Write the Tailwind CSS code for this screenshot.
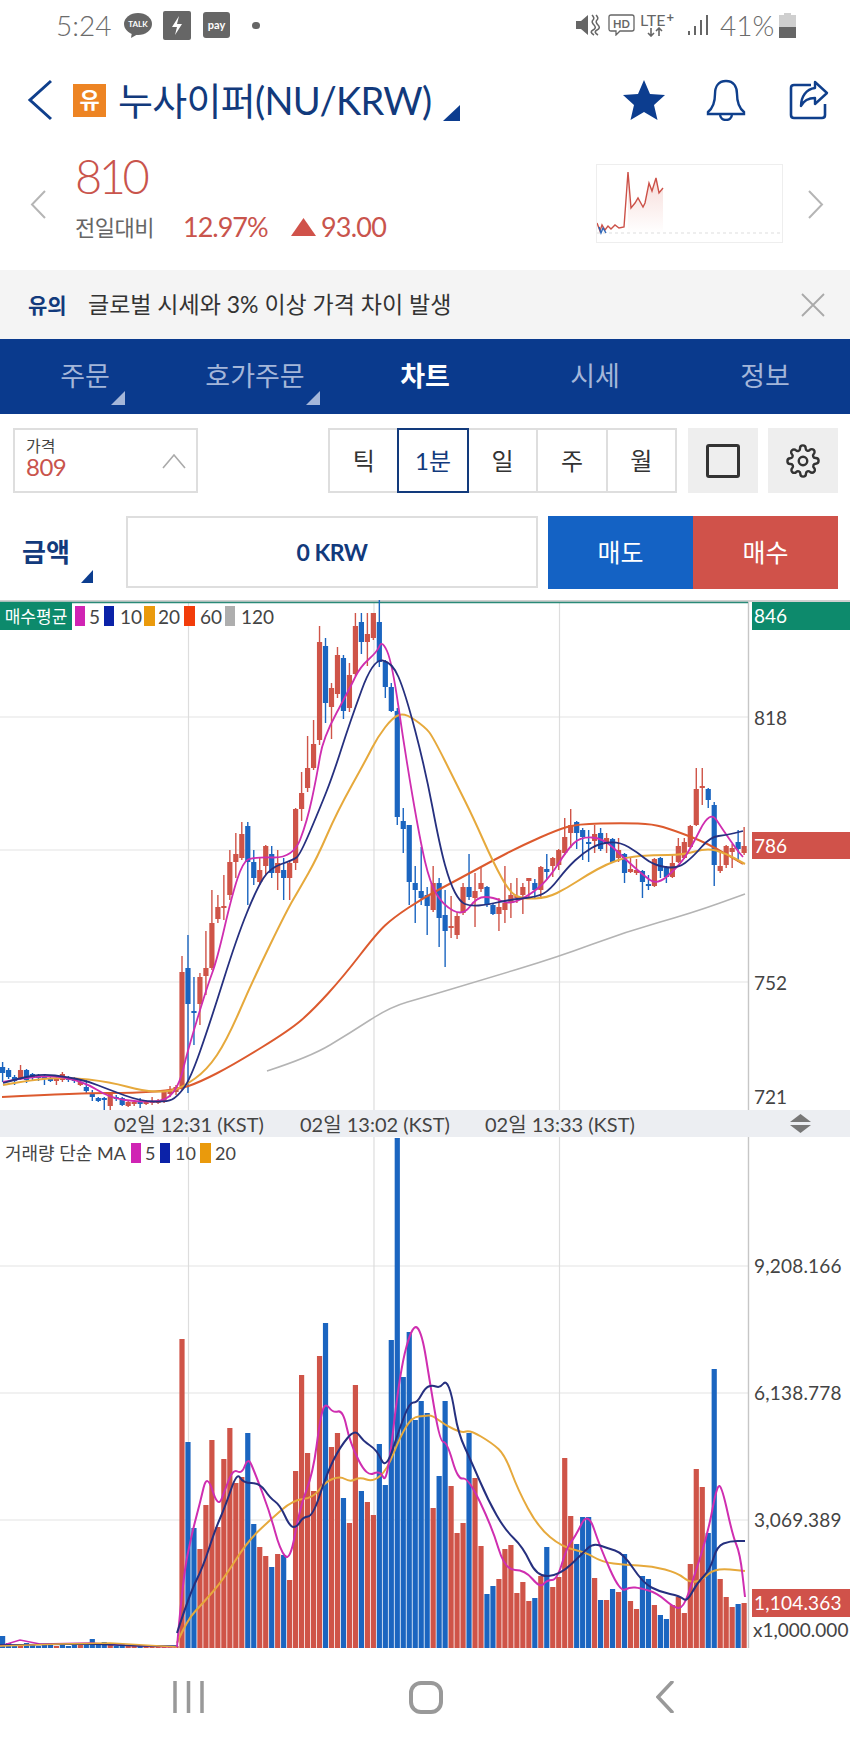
<!DOCTYPE html>
<html>
  <head>
    <meta charset="utf-8" />
    <title>누사이퍼 차트</title>
    <script src="https://cdn.jsdelivr.net/npm/@tailwindcss/browser@4"></script>
  </head>

  <body>
    <div class="relative w-[850px] h-[1748px] overflow-hidden bg-white font-['Lato','Noto_Sans_CJK_KR',sans-serif]">

      <!-- Status bar -->
      <div class="relative h-[62px] text-[#6b6b6b]">
        <div class="flex items-center h-[50px] pl-[56px]">
          <span class="text-[28px] font-light w-[68px] leading-none">5:24</span>
          <svg width="28" height="25" viewBox="0 0 28 25"><ellipse cx="14" cy="11" rx="14" ry="11" fill="#666"/><path d="M8 19l-1 6 7-4z" fill="#666"/><text x="14" y="14" font-size="8" font-weight="700" fill="#fff" text-anchor="middle">TALK</text></svg>
          <svg class="ml-[11px]" width="28" height="29" viewBox="0 0 28 29"><rect width="28" height="29" rx="2" fill="#666"/><path d="M16 5l-7 11h5l-2 8 7-11h-5z" fill="#fff"/></svg>
          <svg class="ml-[12px]" width="27" height="26" viewBox="0 0 27 26"><rect width="27" height="26" rx="3" fill="#666"/><text x="13.5" y="17" font-size="11" font-weight="700" fill="#fff" text-anchor="middle">pay</text></svg>
          <span class="ml-[22px] w-[8px] h-[7px] rounded-full bg-[#666]"></span>
          <svg class="ml-[315px]" width="25" height="24" viewBox="0 0 25 24"><path d="M1 8h5l7-6v20l-7-6H1z" fill="#666"/><path d="M17 2q3 3 1 5t1 5-1 5 1 5M21 2q3 3 1 5t1 5-1 5 1 5" fill="none" stroke="#666" stroke-width="1.5"/></svg>
          <svg class="ml-[8px]" width="27" height="22" viewBox="0 0 27 22"><path d="M3 1h21q2 0 2 2v12q0 2-2 2H12l-4 4v-4H3q-2 0-2-2V3q0-2 2-2z" fill="none" stroke="#666" stroke-width="1.3"/><text x="13.5" y="14" font-size="11" font-weight="700" fill="#666" text-anchor="middle">HD</text></svg>
          <div class="ml-[5px] flex flex-col w-[40px] h-[26px]">
            <div class="flex items-start h-[15px] text-[16px] leading-[15px] text-[#666]">LTE<span class="ml-[1px] text-[13px] leading-[10px] font-bold">+</span></div>
            <svg width="40" height="10" viewBox="0 16 40 10"><path d="M11 17v8M8 22l3 3 3-3M19 25v-8M16 20l3-3 3 3" fill="none" stroke="#666" stroke-width="1.6"/></svg>
          </div>
          <svg class="ml-[7px]" width="21" height="22" viewBox="0 0 21 22"><path d="M1 17h2v4H1zM7 12h2v9H7zM13 6h2v15h-2zM19 1h2v20h-2z" fill="#666"/></svg>
          <span class="ml-[12px] text-[28px] font-light leading-none">41%</span>
          <svg class="ml-[5px]" width="17" height="25" viewBox="0 0 17 25"><path d="M5 0h7v2h5v23H0V2h5z" fill="#cfcfcf"/><rect y="14" width="17" height="11" fill="#666"/></svg>
        </div>
      </div>

      <!-- Title row -->
      <div class="flex items-center h-[76px] pl-[27px]">
        <svg width="26" height="42" viewBox="0 0 26 42"><path d="M24 2L3 21l21 19" fill="none" stroke="#0f3f8c" stroke-width="3"/></svg>
        <span class="ml-[20px] flex items-center justify-center w-[33px] h-[33px] bg-[#ed8423] text-white text-[22px] font-bold leading-none">유</span>
        <span class="ml-[12px] w-[325px] text-[38px] leading-none text-[#123a7c] whitespace-nowrap tracking-[-0.7px]">누사이퍼(NU/KRW)</span>
        <svg class="mt-[26px]" width="17" height="16" viewBox="0 0 17 16"><path d="M17 0v16H0z" fill="#0c3d8f"/></svg>
        <svg class="ml-[162px]" width="44" height="42" viewBox="0 0 44 42"><path d="M22 1l6 14 15 1-11 10 3.500 15L22 33 8.500 41 12 26 1 16l15-1z" fill="#0c3d8f"/></svg>
        <svg class="ml-[40px]" width="40" height="42" viewBox="0 0 40 42"><path d="M20 2c-8 0-11 6-11 13 0 9-2 14-7 18v2h36v-2c-5-4-7-9-7-18 0-7-3-13-11-13zM14 35c0 4 3 6 6 6s6-2 6-6" fill="none" stroke="#0f3f8c" stroke-width="2.400"/></svg>
        <svg class="ml-[43px]" width="40" height="40" viewBox="0 0 40 40"><path d="M22 5H5q-3 0-3 3v27q0 3 3 3h28q3 0 3-3V24" fill="none" stroke="#0f3f8c" stroke-width="2.600"/><path d="M26 2l12 11-12 11v-6c-6 0-11 2-14 8 0-9 5-17 14-18z" fill="none" stroke="#0f3f8c" stroke-width="2.400" stroke-linejoin="round"/></svg>
      </div>

      <!-- Quote row -->
      <div class="relative flex h-[132px]">
        <svg class="mt-[52px] ml-[30px]" width="16" height="29" viewBox="0 0 16 29"><path d="M15 1L2 14.500 15 28" fill="none" stroke="#b5b5b5" stroke-width="2"/></svg>
        <div class="ml-[29px] w-[510px]">
          <div class="mt-[13px] text-[47px] leading-[50px] font-light text-[#c9544c] tracking-[-3.500px]">810</div>
          <div class="mt-[10px] flex items-center h-[32px]">
            <span class="w-[108px] text-[22px] text-[#666] tracking-[-0.5px]">전일대비</span>
            <span class="w-[108px] text-[27px] text-[#c9544c] tracking-[-1px]">12.97%</span>
            <svg width="25" height="18" viewBox="0 0 25 18"><path d="M12.500 0L25 18H0z" fill="#d0524a"/></svg>
            <span class="ml-[5px] text-[27px] text-[#c9544c] tracking-[-0.8px]">93.00</span>
          </div>
        </div>
        <div class="mt-[26px] ml-[11px] w-[187px] h-[79px] border border-[#eeeeee]">
          <svg width="185" height="77" viewBox="0 0 185 77">
            <defs><linearGradient id="miniFill" x1="0" y1="0" x2="0" y2="1"><stop offset="0" stop-color="#f6d9d6"/><stop offset="1" stop-color="#ffffff"/></linearGradient></defs>
            <path d="M31 7L34 43 38 38 41 33 46 42 48 38 52 18 55 26 59 13 62 28 66 23V68H31z" fill="url(#miniFill)"/>
            <path d="M0 68h185" stroke="#dddddd" stroke-dasharray="3 3"/>
            <polyline points="0,58 3,66 5,60 8,65 11,61 14,64 18,60 22,63 27,62 31,7 34,43 38,38 41,33 46,42 48,38 52,18 55,26 59,13 62,28 66,23" fill="none" stroke="#cc5148" stroke-width="1.400"/>
            <polyline points="2,62 4,68 6,63 9,68" fill="none" stroke="#2d66b8" stroke-width="1.400"/>
          </svg>
        </div>
        <svg class="mt-[52px] ml-[25px]" width="16" height="29" viewBox="0 0 16 29"><path d="M1 1l13 13.500L1 28" fill="none" stroke="#b5b5b5" stroke-width="2"/></svg>
      </div>

      <!-- Notice -->
      <div class="flex items-center h-[69px] pl-[28px] bg-[#f4f4f4]">
        <span class="w-[60px] text-[21px] font-bold text-[#123a7c]">유의</span>
        <span class="w-[713px] text-[23px] text-[#333]">글로벌 시세와 3% 이상 가격 차이 발생</span>
        <svg width="24" height="24" viewBox="0 0 24 24"><path d="M1 1l22 22M23 1L1 23" stroke="#a9a9a9" stroke-width="1.800"/></svg>
      </div>

      <!-- Tabs -->
      <div class="grid grid-cols-5 h-[75px] bg-[#0a3a8d] text-[27px] text-[#a4b6d9]">
        <div class="relative flex items-center justify-center">주문<svg class="absolute left-[111px] top-[52px]" width="14" height="14" viewBox="0 0 14 14"><path d="M14 0v14H0z" fill="#a4b6d9"/></svg></div>
        <div class="relative flex items-center justify-center">호가주문<svg class="absolute left-[136px] top-[52px]" width="14" height="14" viewBox="0 0 14 14"><path d="M14 0v14H0z" fill="#a4b6d9"/></svg></div>
        <div class="flex items-center justify-center font-bold text-white">차트</div>
        <div class="flex items-center justify-center">시세</div>
        <div class="flex items-center justify-center">정보</div>
      </div>

      <!-- Chart options -->
      <div class="flex h-[65px] mt-[14px] pl-[13px]">
        <div class="relative w-[185px] h-full border-2 border-[#dedede] pl-[11px]">
          <div class="mt-[7px] text-[16px] leading-[18px] text-[#444]">가격</div>
          <div class="text-[24px] leading-[24px] text-[#c9544c] tracking-[-0.5px]">809</div>
          <svg class="absolute right-[10px] top-[24px]" width="24" height="15" viewBox="0 0 24 15"><path d="M1 14L12 1l11 13" fill="none" stroke="#aaa" stroke-width="1.600"/></svg>
        </div>
        <div class="ml-[130px] flex w-[349px] h-full border-2 border-[#dedede] text-[24px] text-[#333]">
          <div class="flex-1 flex items-center justify-center">틱</div>
          <div class="flex-1 flex items-center justify-center -my-[2px] border-2 border-[#123a7c] text-[#123a7c]">1분</div>
          <div class="flex-1 flex items-center justify-center border-r-2 border-[#dedede]">일</div>
          <div class="flex-1 flex items-center justify-center border-r-2 border-[#dedede]">주</div>
          <div class="flex-1 flex items-center justify-center">월</div>
        </div>
        <div class="ml-[11px] flex items-center justify-center w-[70px] h-full bg-[#eeeeee]">
          <span class="w-[34px] h-[34px] rounded-[3px] border-[3px] border-[#333]"></span>
        </div>
        <div class="ml-[10px] flex items-center justify-center w-[70px] h-full bg-[#eeeeee]">
          <svg width="34" height="34" viewBox="0 0 24 24" fill="none" stroke="#333" stroke-width="1.700"><circle cx="12" cy="12" r="3"/><path d="M19.400 15a1.650 1.650 0 0 0 .33 1.820l.06.06a2 2 0 1 1-2.830 2.830l-.06-.06a1.650 1.650 0 0 0-2.800 1.170V21a2 2 0 1 1-4 0v-.09a1.650 1.650 0 0 0-2.800-1.170l-.06.06a2 2 0 1 1-2.830-2.830l.06-.06a1.650 1.650 0 0 0-1.170-2.800H3a2 2 0 1 1 0-4h.09a1.650 1.650 0 0 0 1.170-2.800l-.06-.06a2 2 0 1 1 2.830-2.830l.06.06a1.650 1.650 0 0 0 2.800-1.170V3a2 2 0 1 1 4 0v.09a1.650 1.650 0 0 0 2.800 1.170l.06-.06a2 2 0 1 1 2.830 2.830l-.06.06a1.650 1.650 0 0 0 1.170 2.800H21a2 2 0 1 1 0 4h-.09a1.650 1.650 0 0 0-1.510 1z"/></svg>
        </div>
      </div>

      <!-- Amount row -->
      <div class="flex h-[73px] mt-[23px]">
        <div class="relative w-[126px] pl-[22px] flex items-center text-[26px] font-bold text-[#123a7c]">
          금액
          <svg class="absolute left-[81px] top-[54px]" width="12" height="13" viewBox="0 0 12 13"><path d="M12 0v13H0z" fill="#0c3d8f"/></svg>
        </div>
        <div class="flex items-center justify-center w-[412px] h-[72px] border-2 border-[#dedede] text-[23px] font-bold text-[#123a7c] tracking-[-0.5px]">0 KRW</div>
        <div class="ml-[10px] flex items-center justify-center w-[145px] bg-[#1462c4] text-[25px] text-white">매도</div>
        <div class="flex items-center justify-center w-[145px] bg-[#d0524a] text-[25px] text-white">매수</div>
      </div>

      <!-- Price chart -->
      <div class="relative h-[510px] mt-[11px] border-t-2 border-[#d0d0d0] text-[19px] text-[#444]">
        <svg id="priceChart" class="absolute left-0 top-[-2px]" width="850" height="510" viewBox="0 600 850 510"></svg>
        <div class="absolute left-0 top-0 flex items-center h-[28px] text-[19px] leading-none">
          <span class="flex items-center justify-center w-[72px] h-[28px] bg-[#0d8a6c] text-[17px] text-white whitespace-nowrap">매수평균</span>
          <span class="ml-[3px] w-[10px] h-[20px] bg-[#d024b4]"></span><span class="ml-[4px] w-[15px]">5</span>
          <span class="w-[10px] h-[20px] bg-[#0b22a8]"></span><span class="ml-[6px] w-[24px]">10</span>
          <span class="w-[11px] h-[20px] bg-[#ea9a0c]"></span><span class="ml-[3px] w-[26px]">20</span>
          <span class="w-[11px] h-[20px] bg-[#f23c0a]"></span><span class="ml-[5px] w-[25px]">60</span>
          <span class="w-[10px] h-[20px] bg-[#aeaeae]"></span><span class="ml-[6px]">120</span>
        </div>
        <div class="absolute left-[752px] top-0 w-[98px] h-[28px] pl-[2px] bg-[#0d8a6c] text-white leading-[28px]">846</div>
        <div class="absolute left-[754px] top-[102px] leading-[28px]">818</div>
        <div class="absolute left-[752px] top-[230px] w-[98px] h-[27px] pl-[2px] bg-[#d0524a] text-white leading-[27px]">786</div>
        <div class="absolute left-[754px] top-[367px] leading-[28px]">752</div>
        <div class="absolute left-[754px] top-[481px] leading-[28px]">721</div>
      </div>

      <!-- Time axis -->
      <div class="relative flex items-center h-[27px] pl-[114px] bg-[#eceef2] text-[20px] text-[#444] whitespace-nowrap">
        <span class="w-[186px]">02일 12:31 (KST)</span>
        <span class="w-[185px]">02일 13:02 (KST)</span>
        <span class="w-[148px]">02일 13:33 (KST)</span>
        <svg class="absolute left-[790px] top-[4px]" width="21" height="19" viewBox="0 0 21 19"><path d="M10.500 0L21 8H0zM0 11h21l-10.500 8z" fill="#777"/></svg>
      </div>

      <!-- Volume chart -->
      <div class="relative h-[511px] text-[19px] text-[#444]">
        <svg id="volumeChart" class="absolute left-0 top-0" width="850" height="511" viewBox="0 1137 850 511"></svg>
        <div class="absolute left-[5px] top-[5px] flex items-center h-[22px] text-[18px] leading-none whitespace-nowrap">
          <span class="w-[126px]">거래량 단순 MA</span>
          <span class="w-[10px] h-[20px] bg-[#d024b4]"></span><span class="ml-[4px] w-[15px]">5</span>
          <span class="w-[10px] h-[20px] bg-[#0b22a8]"></span><span class="ml-[5px] w-[25px]">10</span>
          <span class="w-[11px] h-[20px] bg-[#ea9a0c]"></span><span class="ml-[4px]">20</span>
        </div>
        <div class="absolute left-[754px] top-[115px] leading-[28px] tracking-[0.2px]">9,208.166</div>
        <div class="absolute left-[754px] top-[242px] leading-[28px] tracking-[0.2px]">6,138.778</div>
        <div class="absolute left-[754px] top-[369px] leading-[28px] tracking-[0.2px]">3,069.389</div>
        <div class="absolute left-[752px] top-[452px] w-[98px] h-[28px] pl-[2px] bg-[#d0524a] text-white leading-[28px] tracking-[0.2px]">1,104.363</div>
        <div class="absolute left-[753px] top-[479px] leading-[28px]">x1,000.000</div>
      </div>

      <!-- Android nav -->
      <div class="flex items-center h-[100px] pl-[173px] pb-[2px]">
        <svg width="31" height="32" viewBox="0 0 31 32"><path d="M2 0v32M15.500 0v32M29 0v32" stroke="#999" stroke-width="3.500"/></svg>
        <svg class="ml-[205px]" width="34" height="33" viewBox="0 0 34 33"><rect x="2" y="2" width="30" height="29" rx="10" fill="none" stroke="#999" stroke-width="4"/></svg>
        <svg class="ml-[213px]" width="18" height="32" viewBox="0 0 18 32"><path d="M16 1L2 16l14 15" fill="none" stroke="#999" stroke-width="3.500" stroke-linecap="round"/></svg>
      </div>
    </div>

    <script>
      const RED = "#cf5448", BLUE = "#1b65c0";
      const X0 = 2.6, STEP = 5.98;

      // type, body top, body bottom, wick top, wick bottom (page pixels)
      const candles = [
        ["b",1067,1073,1062,1082],["b",1070,1077,1068,1079],["b",1077,1081,1075,1085],["r",1070,1078,1065,1080],["b",1070,1080,1069,1083],
        ["b",1074,1077,1073,1080],["b",1076,1078,1074,1081],["b",1077,1079,1075,1085],["b",1078,1081,1077,1082],["r",1078,1081,1077,1085],
        ["r",1074,1080,1072,1082],["b",1078,1080,1076,1082],["b",1078,1081,1077,1083],["r",1082,1085,1080,1086],["b",1087,1091,1080,1094],
        ["b",1093,1097,1090,1101],["b",1098,1101,1097,1102],["b",1098,1100,1097,1110],["r",1094,1106,1093,1110],["b",1097,1099,1095,1101],
        ["b",1098,1105,1097,1106],["r",1102,1106,1101,1107],["r",1102,1104,1101,1106],["b",1102,1104,1098,1108],["r",1102,1103,1100,1105],
        ["r",1101,1103,1097,1105],["r",1101,1102,1099,1104],["r",1092,1102,1090,1103],["r",1090,1094,1086,1097],["r",1087,1092,1085,1095],
        ["r",972,1087,956,1090],["b",968,1004,935,1093],["b",1011,1013,977,1045],["r",977,1004,973,1025],["r",968,976,931,995],
        ["r",923,968,890,970],["r",907,919,895,923],["r",906,908,875,920],["r",862,895,850,900],["r",854,862,833,878],
        ["r",834,858,822,860],["b",826,862,822,905],["b",862,878,850,885],["r",870,882,858,885],["r",846,866,845,875],
        ["b",854,873,846,878],["r",863,873,850,890],["b",870,878,858,900],["r",863,878,860,900],["r",809,863,808,870],
        ["r",793,809,772,821],["r",768,788,736,792],["r",744,768,720,770],["r",642,740,626,745],["b",646,703,638,723],
        ["r",688,707,683,739],["r",655,694,647,698],["b",658,711,655,719],["r",675,708,663,712],["r",626,674,613,676],
        ["b",622,642,613,654],["r",634,642,613,666],["r",613,638,613,640],["b",622,662,600,667],["b",662,687,660,698],
        ["b",687,711,683,712],["b",711,817,708,825],["b",821,829,808,853],["b",825,882,825,905],["b",883,890,866,923],
        ["b",891,898,847,905],["b",895,906,887,935],["r",883,910,866,912],["b",883,918,878,947],["b",915,931,890,967],
        ["r",926,928,896,938],["r",916,935,912,939],["r",887,913,883,915],["b",887,897,854,900],["r",891,898,873,927],
        ["r",883,889,867,892],["b",887,905,886,907],["b",905,914,903,915],["r",907,914,898,931],["r",903,910,866,923],
        ["r",895,903,883,918],["r",896,898,878,903],["r",887,895,883,914],["r",878,881,878,897],["b",883,890,879,898],
        ["r",867,890,866,899],["b",869,872,854,880],["r",858,866,857,877],["r",850,865,849,870],["r",837,853,818,855],
        ["r",825,833,809,848],["b",822,833,821,849],["b",830,837,828,860],["b",842,844,830,862],["r",834,841,825,853],
        ["b",833,849,828,851],["r",838,844,833,853],["b",839,862,838,863],["r",850,858,838,862],["b",854,873,853,883],
        ["r",869,872,858,873],["r",870,873,859,875],["b",871,882,870,898],["b",884,886,875,890],["r",859,886,858,887],
        ["b",858,871,857,878],["b",868,877,866,883],["r",863,877,855,878],["r",846,862,838,863],["r",842,858,838,859],
        ["r",826,847,825,848],["r",789,825,768,826],["r",786,788,768,805],["b",789,800,788,808],["b",805,865,802,886],
        ["r",866,871,850,873],["r",846,865,845,868],["r",848,852,844,868],["b",842,849,830,862],["r",846,853,827,855]
      ];

      // top of each volume bar, colour taken from the letter
      const lowVolume = [1636,1643,1645,1644,1643,1645,1646,1644,1645,1646,1644,1646,1645,1645,1643,1639,1643,1642,1645,1646,1644,1645,1646,1646,1646,1646,1646,1646,1646,1646];
      const lowColour = "bbbrbbbbbrbbbrbbbbrbbrrbrrrrrr";
      const volume = [
        "r1339","b1442","b1528","r1549","r1505","r1440","r1527","r1459","r1428","r1483","r1477","b1433","b1524","r1547","r1556","b1567","r1554","b1555","r1580","r1471",
        "r1375","r1453","r1491","r1356","b1323","r1447","r1433","b1498","r1523","r1385","b1491","r1502","r1515","b1444","b1485","b1340","b1138","b1377","b1332","b1420",
        "b1401","b1413","r1508","b1476","b1401","r1486","r1533","r1523","b1433","r1478","r1546","b1594","b1586","r1579","r1549","r1545","r1593","r1582","r1601","b1598",
        "r1576","b1547","r1587","r1577","r1458","r1516","b1544","b1517","b1517","r1578","b1600","r1600","b1589","r1592","b1554","r1601","r1609","b1576","b1579","r1605",
        "b1615","b1619","r1605","r1597","r1613","r1564","r1469","r1487","b1533","b1369","r1579","r1597","r1607","b1604","r1603"
      ];

      const priceLines = [
        ["#b4b4b4",1.5,"267,1071 310,1057 350,1033 390,1007 425,997 475,982 558,957 625,932 692,913 745,894"],
        ["#dc5a2e",2,"2,1097 83,1093 133,1093 177,1090 200,1082 233,1065 290,1030 313,1010 343,977 377,933 393,918 423,898 457,880 490,862 523,845 557,830 577,824 623,823 653,824 673,830 707,843 743,864"],
        ["#e6a93c",2,"3,1085 30,1080 67,1077 110,1082 143,1091 167,1092 183,1087 207,1070 227,1040 253,980 287,910 300,888 317,858 337,812 367,758 377,738 393,717 405,713 425,727 433,737 457,785 473,817 493,862 510,893 523,899 547,898 567,888 587,875 607,864 627,857 653,855 683,855 707,848 725,853 745,864"],
        ["#cf2eb0",1.8,"3,1082 43,1074 83,1081 110,1098 140,1102 167,1101 180,1083 187,1053 207,987 217,960 232,895 243,862 253,857 293,858 307,822 317,775 323,738 350,688 360,667 377,652 382,640 392,662 405,752 420,840 430,883 443,905 463,916 477,897 493,897 510,905 533,893 550,877 567,850 580,837 603,838 623,857 643,875 657,885 677,868 690,850 710,810 723,830 737,850 743,857"],
        ["#26307f",1.8,"3,1083 20,1078 43,1074 67,1077 87,1081 110,1090 140,1101 167,1102 177,1097 190,1080 210,1023 237,937 257,888 270,868 293,860 300,855 320,808 333,775 350,722 373,659 392,662 405,692 425,768 440,847 450,883 460,902 470,906 487,905 507,900 537,897 550,890 567,868 583,853 600,843 620,842 637,852 653,865 677,869 693,857 710,837 727,835 743,831"]
      ];

      const volumeLines = [
        ["#e6a93c",2,"177,1643 187,1620 203,1603 223,1580 247,1542 270,1520 293,1500 313,1498 325,1482 340,1476 350,1482 360,1477 373,1482 387,1470 400,1437 412,1417 425,1416 432,1415 445,1425 462,1433 470,1430 492,1443 505,1455 518,1490 538,1527 562,1547 585,1552 602,1562 625,1565 652,1566 678,1573 690,1583 702,1580 715,1568 745,1571"],
        ["#cf2eb0",2,"177,1647 183,1577 192,1533 200,1503 207,1473 218,1508 225,1490 233,1469 242,1474 248,1457 255,1473 270,1513 280,1550 290,1562 300,1507 313,1473 320,1420 325,1402 333,1413 343,1410 350,1443 367,1477 380,1470 387,1485 400,1370 413,1323 422,1333 430,1383 440,1442 447,1442 458,1480 468,1477 492,1527 505,1570 525,1570 540,1588 547,1580 557,1580 567,1547 575,1537 588,1511 600,1547 620,1592 630,1587 640,1588 657,1593 673,1607 683,1609 693,1580 708,1533 717,1485 722,1487 733,1537 740,1553 745,1597"],
        ["#26307f",2,"177,1633 190,1593 203,1567 215,1530 225,1507 237,1472 243,1483 260,1483 270,1498 280,1505 290,1527 297,1527 303,1517 313,1516 327,1473 340,1447 355,1429 363,1441 377,1450 386,1470 400,1427 410,1402 417,1403 425,1388 432,1385 440,1388 446,1380 452,1395 458,1433 472,1463 488,1500 505,1530 523,1547 537,1577 560,1575 583,1553 593,1543 607,1548 623,1553 643,1583 660,1592 680,1596 687,1602 697,1583 710,1570 717,1546 730,1541 745,1541"]
      ];

      const NS = "http://www.w3.org/2000/svg";
      function add(svg, tag, attrs) {
        const el = document.createElementNS(NS, tag);
        for (const k in attrs) el.setAttribute(k, attrs[k]);
        svg.appendChild(el);
      }
      function grid(svg, rows, top, bottom) {
        rows.forEach(y => add(svg, "line", { x1: 0, x2: 748, y1: y, y2: y, stroke: "#e4e4e4", "stroke-width": 1.2 }));
        [188.5, 374, 559.5].forEach(x => add(svg, "line", { x1: x, x2: x, y1: top, y2: bottom, stroke: "#dddddd", "stroke-width": 1.2 }));
        add(svg, "line", { x1: 748.5, x2: 748.5, y1: top, y2: bottom, stroke: "#c6c6c6", "stroke-width": 1.4 });
      }
      // rounds the corners: each point becomes a control point between midpoints
      function smooth(points) {
        const p = points.split(" ").map(s => s.split(",").map(Number));
        let d = `M${p[0][0]} ${p[0][1]}`;
        for (let i = 1; i < p.length - 1; i++) {
          const mx = (p[i][0] + p[i + 1][0]) / 2, my = (p[i][1] + p[i + 1][1]) / 2;
          d += `Q${p[i][0]} ${p[i][1]} ${mx} ${my}`;
        }
        const last = p[p.length - 1];
        return d + `L${last[0]} ${last[1]}`;
      }
      function lines(svg, list) {
        list.forEach(([stroke, width, points]) => add(svg, "path", { d: smooth(points), stroke, "stroke-width": width, fill: "none" }));
      }

      const price = document.getElementById("priceChart");
      grid(price, [717, 850, 982], 602, 1110);
      add(price, "line", { x1: 0, x2: 748, y1: 602.5, y2: 602.5, stroke: "#2a8a78", "stroke-width": 1.5 });
      candles.forEach(([t, top, bottom, hi, lo], i) => {
        const x = X0 + STEP * i, fill = t === "r" ? RED : BLUE;
        add(price, "rect", { x: x - 0.7, y: hi, width: 1.4, height: lo - hi, fill });
        add(price, "rect", { x: x - 2.6, y: top, width: 5.2, height: Math.max(bottom - top, 2), fill });
      });
      lines(price, priceLines);

      const vol = document.getElementById("volumeChart");
      grid(vol, [1266, 1393, 1520], 1137, 1648);
      const bars = lowVolume.map((top, i) => lowColour[i] + top).concat(volume);
      bars.forEach((bar, i) => {
        const y = +bar.slice(1);
        add(vol, "rect", { x: X0 + STEP * i - 2.6, y, width: 5.2, height: 1648 - y, fill: bar[0] === "r" ? RED : BLUE });
      });
      add(vol, "polyline", { points: "0,1646 20,1640 40,1644 90,1643 120,1645 177,1647", stroke: "#cf2eb0", "stroke-width": 1.5, fill: "none" });
      add(vol, "polyline", { points: "0,1645 90,1644 140,1646 177,1646", stroke: "#26307f", "stroke-width": 1.5, fill: "none" });
      add(vol, "polyline", { points: "0,1646 60,1644 110,1643 177,1647", stroke: "#e6a93c", "stroke-width": 1.5, fill: "none" });
      lines(vol, volumeLines);
    </script>
  </body>
</html>
